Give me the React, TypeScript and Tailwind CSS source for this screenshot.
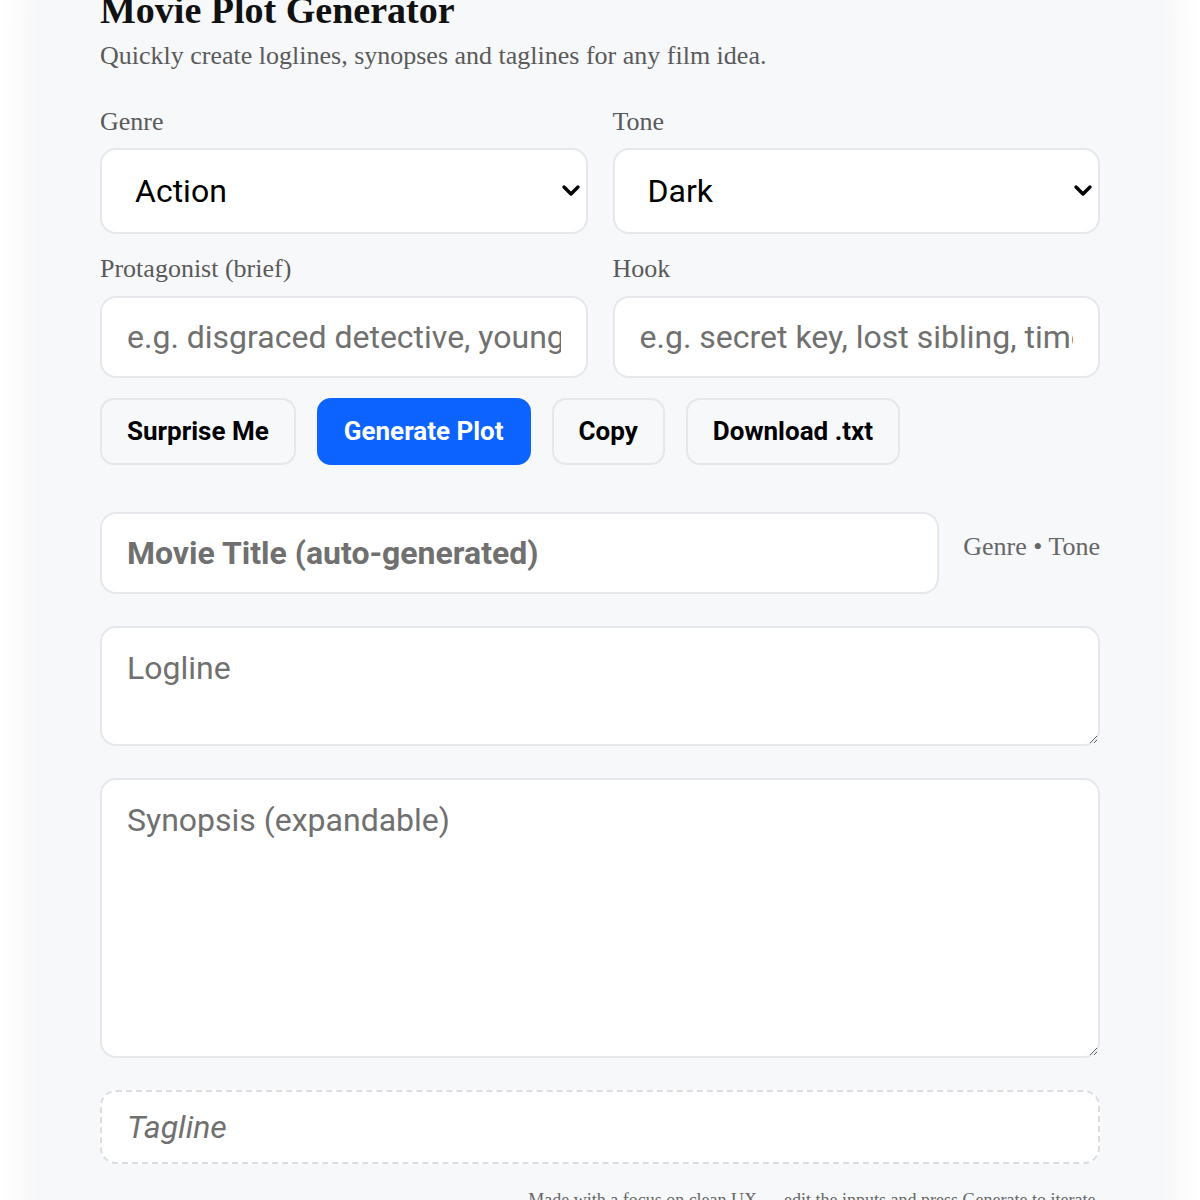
import React from 'react';

const serif = "font-['Liberation_Serif','Times_New_Roman',serif]";
const sans = "font-['Roboto','Liberation_Sans',sans-serif]";

// chevron used in place of the native select arrow
const Chevron: React.FC = () => (
  <svg
    viewBox="0 0 20 14"
    className="pointer-events-none absolute right-[7px] top-1/2 -translate-y-1/2 w-[20px] h-[14px]"
    fill="none"
    stroke="black"
    strokeWidth={3.4}
    strokeLinecap="round"
    strokeLinejoin="round"
  >
    <polyline points="3,3 10,10 17,3" />
  </svg>
);

type SelectProps = {
  label: string;
  value: string;
  options: string[];
};

const SelectField: React.FC<SelectProps> = ({ label, value, options }) => {
  return (
    <label className="flex flex-col">
      <span className={`${serif} text-[26px] leading-[32px] text-[#5a5a5a]`}>{label}</span>
      <div className="relative mt-[10px]">
        <select
          defaultValue={value}
          className={`${sans} w-full h-[86px] appearance-none rounded-[16px] border-2 border-[#e6e7ea] bg-white pl-[33px] pr-12 text-[32px] text-black outline-none`}
        >
          {options.map((o) => (
            <option key={o}>{o}</option>
          ))}
        </select>
        <Chevron />
      </div>
    </label>
  );
};

type InputProps = {
  label: string;
  placeholder: string;
};

const TextField: React.FC<InputProps> = ({ label, placeholder }) => {
  return (
    <label className="flex flex-col">
      <span className={`${serif} text-[26px] leading-[32px] text-[#5a5a5a]`}>{label}</span>
      <input
        placeholder={placeholder}
        className={`${sans} mt-[11px] h-[82px] w-full rounded-[16px] border-2 border-[#e6e7ea] bg-white px-[25px] text-[32px] text-black outline-none placeholder:text-[#707070]`}
      />
    </label>
  );
};

const Button: React.FC<{ children: React.ReactNode; primary?: boolean }> = ({ children, primary }) => {
  return (
    <button
      className={
        primary
          ? `${sans} h-[67px] rounded-[14px] border-2 border-[#0d63ff] bg-[#0d63ff] px-[25px] text-[26px] font-bold text-white`
          : `${sans} h-[67px] rounded-[14px] border-2 border-[#e6e7ea] bg-[#f7f8fa] px-[25px] text-[26px] font-bold text-black`
      }
    >
      {children}
    </button>
  );
};

const App: React.FC = () => {
  return (
    <div className="min-h-screen bg-white overflow-hidden">
      <div className="mx-[40px] mt-[-52px] rounded-[20px] bg-[#f7f8fa] px-[60px] pt-[40px] pb-[40px] shadow-[0_10px_60px_rgba(0,0,0,0.07)]">
        <h1 className={`${serif} text-[38px] leading-[44px] font-bold text-[#111]`}>Movie Plot Generator</h1>
        <p className={`${serif} mt-[8px] text-[26px] leading-[32px] text-[#5a5a5a]`}>
          Quickly create loglines, synopses and taglines for any film idea.
        </p>

        <div className="mt-[34px] grid grid-cols-2 gap-x-[25px] gap-y-[19px]">
          <SelectField
            label="Genre"
            value="Action"
            options={['Action', 'Comedy', 'Drama', 'Horror', 'Sci-Fi', 'Romance', 'Thriller']}
          />
          <SelectField
            label="Tone"
            value="Dark"
            options={['Dark', 'Lighthearted', 'Epic', 'Quirky', 'Gritty']}
          />
          <TextField label="Protagonist (brief)" placeholder="e.g. disgraced detective, young inventor" />
          <TextField label="Hook" placeholder="e.g. secret key, lost sibling, time loop" />
        </div>

        <div className="mt-[20px] flex gap-[21px]">
          <Button>Surprise Me</Button>
          <Button primary>Generate Plot</Button>
          <Button>Copy</Button>
          <Button>Download .txt</Button>
        </div>

        <div className="mt-[47px] flex items-start gap-[24px]">
          <input
            placeholder="Movie Title (auto-generated)"
            className={`${sans} h-[82px] flex-1 rounded-[16px] border-2 border-[#e6e7ea] bg-white px-[25px] text-[32px] font-bold text-black outline-none placeholder:text-[#707070]`}
          />
          <span className={`${serif} pt-[19px] text-[26px] leading-[32px] text-[#666]`}>Genre • Tone</span>
        </div>

        <textarea
          placeholder="Logline"
          className={`${sans} mt-[32px] block h-[120px] w-full rounded-[16px] border-2 border-[#e6e7ea] bg-white px-[25px] py-[20px] text-[32px] leading-[40px] text-black outline-none placeholder:text-[#707070]`}
        />

        <textarea
          placeholder="Synopsis (expandable)"
          className={`${sans} mt-[32px] block h-[280px] w-full rounded-[16px] border-2 border-[#e6e7ea] bg-white px-[25px] py-[20px] text-[32px] leading-[40px] text-black outline-none placeholder:text-[#707070]`}
        />

        <div
          className={`${sans} mt-[32px] flex h-[74px] items-center rounded-[16px] border-2 border-dashed border-[#dcdde0] bg-white px-[25px] text-[32px] italic text-[#707070]`}
        >
          Tagline
        </div>

        <p className={`${serif} mt-[24px] text-right text-[18px] leading-[24px] text-[#666]`}>
          Made with a focus on clean UX — edit the inputs and press Generate to iterate.
        </p>
      </div>
    </div>
  );
};

export default App;
